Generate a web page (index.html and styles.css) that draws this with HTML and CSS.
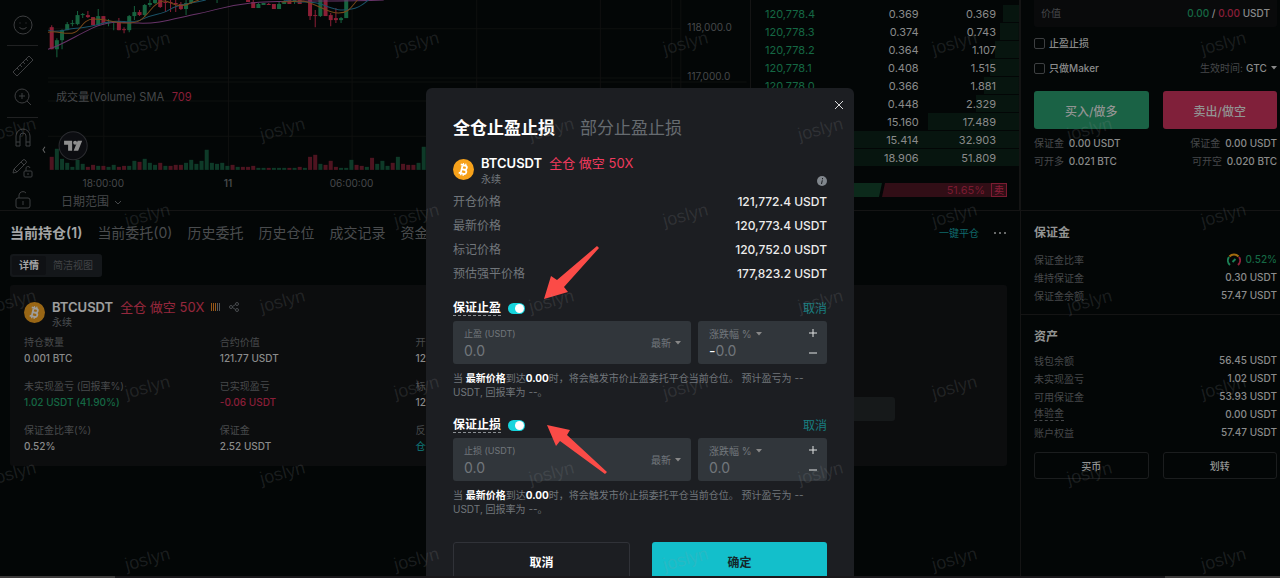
FILE: index.html
```html
<!DOCTYPE html>
<html lang="zh-CN">
<head>
    <meta charset="UTF-8">
    <meta name="viewport" content="width=device-width, initial-scale=1.0">
    <title>BTCUSDT 永续</title>
    <link rel="stylesheet" href="styles.css">
</head>
<body>

    <!-- Shared icons -->
    <svg class="sprite" aria-hidden="true">
        <symbol id="coin" viewBox="0 0 20 20">
            <circle cx="10" cy="10" r="10" fill="#f7a21b"/>
            <g transform="rotate(14 10 10)" fill="none" stroke="#fff" stroke-width="1.7">
                <path d="M6.3 6h4.4a2 2 0 0 1 0 4H8.2M8.2 10h3a2 2 0 0 1 0 4H6.3M8.2 6v8"/>
                <path d="M8.6 4v2M11 4v2M8.6 14v2M11 14v2" stroke-width="1.2"/>
            </g>
        </symbol>
    </svg>

    <div class="page">
        <main class="main">
            <section class="market">
                <!-- Drawing tools -->
                <nav class="tools">
                    <button type="button" aria-label="Emoji"><svg viewBox="0 0 22 22"><circle cx="11" cy="11" r="9"/><path d="M7.5 13c1 2.600 6 2.600 7 0M8 8.500v1M14 8.500v1"/></svg></button>
                    <hr>
                    <button type="button" aria-label="Ruler"><svg viewBox="0 0 22 22"><path d="M1 17 17 1l4 4L5 21zM5 13l2 2M8 10l2 2M11 7l2 2M14 4l2 2"/></svg></button>
                    <button type="button" aria-label="Zoom"><svg viewBox="0 0 22 22"><circle cx="10" cy="10" r="7"/><path d="m15 15 4 4M10 7v6M7 10h6"/></svg></button>
                    <hr>
                    <button type="button" aria-label="Magnet"><svg viewBox="0 0 22 22"><path d="M4 19V9a7 7 0 0 1 14 0v10h-4V9a3 3 0 0 0-6 0v10zM4 15h4M14 15h4"/></svg></button>
                    <button type="button" aria-label="Lock drawing"><svg viewBox="0 0 22 22"><path d="m1 15 1-4 9-9q1-1 2 0l1 1q1 1 0 2l-9 9zM9 4l3 3M2 11l3 3"/><rect x="12" y="13" width="8" height="6" rx="1"/><path d="M14 13v-2a2 2 0 0 1 4-1M16 15v2"/></svg></button>
                    <button type="button" aria-label="Lock"><svg viewBox="0 0 22 22"><rect x="4" y="9" width="14" height="10" rx="2"/><path d="M7 9V6a4 4 0 0 1 7-2M11 12v4"/></svg></button>
                </nav>

                <!-- Price chart -->
                <div class="chart">
                    <svg class="chart-canvas" viewBox="48 0 703 192" preserveAspectRatio="xMinYMin slice">
                        <path class="grid-line" d="M48 28.500H677M48 77.500H677M48 81.500H743M48 100.500H677M48 135.500H677M103.500 0V169M227.500 0V169M350.500 0V169M474.500 0V169M597.500 0V169M668.500 0V169M677.500 0V169"/>
                        <g id="candles"></g>
                        <path class="ma ma-slow" d="M48 49C60 46 75 36 92 28S120 22 138 23 172 19 196 14 222 6 250 3 330 2 382 0"/>
                        <path class="ma ma-mid" d="M48 30C58 34 66 28 76 28S94 25 108 22 130 25 142 19 160 15 168 10 182 5 205 0M283 0C298 4 310 0 322 5S340 11 350 9 362 3 367 0"/>
                        <path class="ma ma-fast" d="M48 32C56 30 62 34 72 33S80 19 94 19 114 23 126 23 142 20 150 10 164 0 168 2 182 8 190 3L198 0M280 2 302 1C318 5 326 13 337 13S350 6 356 0"/>
                        <g id="volume"></g>
                        <text class="chart-label" x="56" y="100">成交量(Volume) SMA</text>
                        <text class="chart-label chart-value" x="171" y="100">709</text>
                        <circle cx="73" cy="145" r="14" fill="#0c0d11" stroke="#2b2c30"/>
                        <path fill="#8e8e8e" d="M64 140h8v10h-4v-6h-4zM77.500 140h4.500l-4 10h-4.500z"/>
                        <circle cx="75" cy="142" r="2" fill="#8e8e8e"/>
                        <path class="fold" d="m45 146-2 3 2 3"/>
                        <text class="axis-label" x="684" y="31">118,000.0</text>
                        <text class="axis-label" x="684" y="80">117,000.0</text>
                        <text class="axis-label axis-time" x="103" y="186">18:00:00</text>
                        <text class="axis-label axis-time axis-day" x="227" y="186">11</text>
                        <text class="axis-label axis-time" x="350" y="186">06:00:00</text>
                    </svg>
                    <button type="button" class="range">日期范围 <svg viewBox="0 0 8 8"><path d="m1 3 3 3 3-3"/></svg></button>
                </div>

                <!-- Order book -->
                <div class="book">
                    <table class="book-table">
                        <tbody>
                            <tr style="--depth: 6%"><td>120,778.4</td><td>0.369</td><td>0.369</td></tr>
                            <tr style="--depth: 7%"><td>120,778.3</td><td>0.374</td><td>0.743</td></tr>
                            <tr style="--depth: 9%"><td>120,778.2</td><td>0.364</td><td>1.107</td></tr>
                            <tr style="--depth: 11%"><td>120,778.1</td><td>0.408</td><td>1.515</td></tr>
                            <tr style="--depth: 13%"><td>120,778.0</td><td>0.366</td><td>1.881</td></tr>
                            <tr style="--depth: 16%"><td>120,777.9</td><td>0.448</td><td>2.329</td></tr>
                            <tr style="--depth: 34%"><td>120,777.8</td><td>15.160</td><td>17.489</td></tr>
                            <tr style="--depth: 100%"><td>120,777.7</td><td>15.414</td><td>32.903</td></tr>
                            <tr style="--depth: 100%"><td>120,777.6</td><td>18.906</td><td>51.809</td></tr>
                        </tbody>
                    </table>
                    <div class="ratio">
                        <span class="ratio-buy" style="width: 48.35%"></span>
                        <span class="ratio-sell">51.65%</span>
                        <span class="ratio-tag">卖</span>
                    </div>
                </div>
            </section>

            <!-- Positions -->
            <section class="positions">
                <div class="position-tabs">
                    <a href="#" class="active">当前持仓(1)</a>
                    <a href="#">当前委托(0)</a>
                    <a href="#">历史委托</a>
                    <a href="#">历史仓位</a>
                    <a href="#">成交记录</a>
                    <a href="#">资金流水</a>
                    <a href="#" class="close-all">一键平仓</a>
                    <button type="button" class="more" aria-label="More"><i></i><i></i><i></i></button>
                </div>
                <div class="view-switch">
                    <button type="button" class="active">详情</button>
                    <button type="button">简洁视图</button>
                </div>
                <article class="card">
                    <div class="symbol dim">
                        <svg class="coin"><use href="#coin"/></svg>
                        <div>
                            <div class="symbol-line">
                                <strong>BTCUSDT</strong>
                                <span class="side">全仓 做空 50X</span>
                                <svg class="risk" viewBox="0 0 11 8"><path stroke="#f58a1f" d="M.5 0v8M2.500 0v8M4.500 0v8"/><path stroke="#8b8b8b" d="M6.500 0v8M8.500 0v8"/></svg>
                                <svg class="share" viewBox="0 0 10 10"><circle cx="2" cy="5" r="1.500"/><circle cx="8" cy="2" r="1.500"/><circle cx="8" cy="8" r="1.500"/><path d="m3.500 4.500 3-2M3.500 5.500l3 2"/></svg>
                            </div>
                            <div class="symbol-type">永续</div>
                        </div>
                    </div>
                    <dl class="stats">
                        <div><dt>持仓数量</dt><dd>0.001 BTC</dd></div>
                        <div><dt>合约价值</dt><dd>121.77 USDT</dd></div>
                        <div><dt>开仓价格</dt><dd>121,772.4</dd></div>
                        <div></div>
                        <div></div>
                        <div><dt>未实现盈亏 (回报率%)</dt><dd class="up">1.02 USDT (41.90%)</dd></div>
                        <div><dt>已实现盈亏</dt><dd class="down">-0.06 USDT</dd></div>
                        <div><dt>标记价格</dt><dd>120,752.0</dd></div>
                        <div></div>
                        <div class="card-action"><button type="button" aria-label="平仓"></button></div>
                        <div><dt>保证金比率(%)</dt><dd>0.52%</dd></div>
                        <div><dt>保证金</dt><dd>2.52 USDT</dd></div>
                        <div><dt>反向开仓</dt><dd class="link">仓位反向</dd></div>
                    </dl>
                </article>
            </section>
        </main>

        <!-- Order form and balances -->
        <aside class="side-panel">
            <section class="order">
                <div class="worth"><span>价值</span><b><span class="up">0.00</span> / <span class="down">0.00</span> USDT</b></div>
                <div class="check-row">
                    <label><input type="checkbox">止盈止损</label>
                </div>
                <div class="check-row">
                    <label><input type="checkbox">只做Maker</label>
                    <span class="tif"><label for="tif">生效时间:</label>
                        <select id="tif"><option>GTC</option><option>IOC</option></select></span>
                </div>
                <div class="pair">
                    <button type="button" class="buy">买入/做多</button>
                    <button type="button" class="sell">卖出/做空</button>
                </div>
                <div class="pair limits">
                    <p>保证金 <b>0.00 USDT</b><br>可开多 <b>0.021 BTC</b></p>
                    <p>保证金 <b>0.00 USDT</b><br>可开空 <b>0.020 BTC</b></p>
                </div>
            </section>
            <section class="balance margin-box">
                <h2>保证金</h2>
                <dl>
                    <div><dt>保证金比率</dt><dd class="up"><svg class="gauge" viewBox="0 0 14 13"><path stroke="#22a06b" d="M3 12A6 6 0 0 1 2 4"/><path stroke="#c98510" d="M2.500 3.500a6 6 0 0 1 9 0"/><path stroke="#b52a49" d="M12 4a6 6 0 0 1-1 8"/><path stroke="#22a06b" d="m5.500 9 3-3"/></svg>0.52%</dd></div>
                    <div><dt>维持保证金</dt><dd>0.30 USDT</dd></div>
                    <div><dt>保证金余额</dt><dd>57.47 USDT</dd></div>
                </dl>
            </section>
            <section class="balance">
                <h2>资产</h2>
                <dl>
                    <div><dt>钱包余额</dt><dd>56.45 USDT</dd></div>
                    <div><dt>未实现盈亏</dt><dd>1.02 USDT</dd></div>
                    <div><dt>可用保证金</dt><dd>53.93 USDT</dd></div>
                    <div><dt class="hint">体验金</dt><dd>0.00 USDT</dd></div>
                    <div><dt>账户权益</dt><dd>57.47 USDT</dd></div>
                </dl>
                <div class="pair">
                    <button type="button" class="outline">买币</button>
                    <button type="button" class="outline">划转</button>
                </div>
            </section>
        </aside>

        <!-- TP/SL dialog -->
        <div class="overlay">
            <form class="modal">
                <button type="button" class="close" aria-label="关闭"><svg viewBox="0 0 10 10"><path d="m1 1 8 8M9 1 1 9"/></svg></button>
                <div class="modal-tabs">
                    <button type="button" class="active">全仓止盈止损</button>
                    <button type="button">部分止盈止损</button>
                </div>
                <div class="symbol">
                    <svg class="coin"><use href="#coin"/></svg>
                    <div>
                        <div class="symbol-line">
                            <strong>BTCUSDT</strong>
                            <span class="side">全仓 做空 50X</span>
                        </div>
                        <div class="symbol-type">永续</div>
                    </div>
                    <svg class="info" viewBox="0 0 10 10"><circle cx="5" cy="5" r="5" fill="#80868c"/><path stroke="#1c1e22" d="m5.300 4.300-.8 3.700M5.500 2v1.300"/></svg>
                </div>
                <dl class="prices">
                    <div><dt>开仓价格</dt><dd>121,772.4 USDT</dd></div>
                    <div><dt>最新价格</dt><dd>120,773.4 USDT</dd></div>
                    <div><dt>标记价格</dt><dd>120,752.0 USDT</dd></div>
                    <div><dt>预估强平价格</dt><dd>177,823.2 USDT</dd></div>
                </dl>

                <section class="trigger">
                    <div class="trigger-head">
                        <label for="tp-on">保证止盈</label>
                        <input type="checkbox" class="switch" id="tp-on" checked>
                        <a href="#">取消</a>
                    </div>
                    <div class="fields">
                        <div class="field">
                            <div class="field-main">
                                <label for="tp">止盈 (USDT)</label>
                                <input type="text" id="tp" placeholder="0.0">
                            </div>
                            <select aria-label="价格类型"><option>最新</option><option>标记</option></select>
                        </div>
                        <div class="field">
                            <div class="field-main">
                                <select class="unit" aria-label="单位"><option>涨跌幅 %</option></select>
                                <div class="signed"><span>-</span><input type="text" aria-label="止盈涨跌幅" placeholder="0.0"></div>
                            </div>
                            <div class="stepper">
                                <button type="button" aria-label="增加"><svg viewBox="0 0 8 8"><path d="M0 4h8M4 0v8"/></svg></button>
                                <button type="button" aria-label="减少"><svg viewBox="0 0 8 8"><path d="M0 4h8"/></svg></button>
                            </div>
                        </div>
                    </div>
                    <p>当 <b>最新价格</b>到达<b>0.00</b>时，将会触发市价止盈委托平仓当前仓位。 预计盈亏为 -- USDT, 回报率为 --。</p>
                </section>

                <section class="trigger">
                    <div class="trigger-head">
                        <label for="sl-on">保证止损</label>
                        <input type="checkbox" class="switch" id="sl-on" checked>
                        <a href="#">取消</a>
                    </div>
                    <div class="fields">
                        <div class="field">
                            <div class="field-main">
                                <label for="sl">止损 (USDT)</label>
                                <input type="text" id="sl" placeholder="0.0">
                            </div>
                            <select aria-label="价格类型"><option>最新</option><option>标记</option></select>
                        </div>
                        <div class="field">
                            <div class="field-main">
                                <select class="unit" aria-label="单位"><option>涨跌幅 %</option></select>
                                <div class="signed"><input type="text" aria-label="止损涨跌幅" placeholder="0.0"></div>
                            </div>
                            <div class="stepper">
                                <button type="button" aria-label="增加"><svg viewBox="0 0 8 8"><path d="M0 4h8M4 0v8"/></svg></button>
                                <button type="button" aria-label="减少"><svg viewBox="0 0 8 8"><path d="M0 4h8"/></svg></button>
                            </div>
                        </div>
                    </div>
                    <p>当 <b>最新价格</b>到达<b>0.00</b>时，将会触发市价止损委托平仓当前仓位。 预计盈亏为 -- USDT, 回报率为 --。</p>
                </section>

                <div class="modal-actions">
                    <button type="button" class="cancel">取消</button>
                    <button type="button" class="confirm">确定</button>
                </div>

                <svg class="arrows" viewBox="0 0 428 490"><path d="m171 158 2 2-35 39 4 5-24 7 7-23 6 4zM121 337l23 5-3 5 40 37-2 2-45-33-4 5z"/></svg>
            </form>
        </div>

        <div class="watermark" id="watermark" aria-hidden="true"></div>
    </div>
    <footer class="scrollbar"><i></i><i></i></footer>

    <script src="chart.js"></script>
</body>
</html>
```
FILE: styles.css
```css
* {
    box-sizing: border-box;
}
body {
    margin: 0;
    height: 100vh;
    display: flex;
    flex-direction: column;
    overflow: hidden;
    background: #030606;
    color: #8a8b8b;
    font-family: Inter, "Noto Sans CJK SC", sans-serif;
    font-size: 10px;
}
button, input, select {
    font: inherit;
    color: inherit;
    background: none;
    border: 0;
    margin: 0;
    padding: 0;
}
a {
    color: inherit;
    text-decoration: none;
}
dl, dd, p, h2 {
    margin: 0;
}
svg {
    fill: none;
    stroke-width: 1;
}
b, strong {
    font-weight: 500;
}
.sprite {
    position: absolute;
    width: 0;
    height: 0;
}
.up {
    color: #156844;
}
.down {
    color: #8a1e38;
}
.link {
    color: #0f6a6c;
}

/* Page frame */
.page {
    position: relative;
    flex: 1;
    min-height: 0;
    display: grid;
    grid-template-columns: 1fr 260px;
    overflow: hidden;
}
.main {
    min-width: 0;
}
.market {
    display: grid;
    grid-template-columns: 48px 1fr 269px;
    height: 211px;
    border-bottom: 1px solid #141414;
}

/* Drawing tools */
.tools {
    display: flex;
    flex-direction: column;
    align-items: center;
    justify-content: space-between;
    padding: 14px 3px 0 0;
    overflow: hidden;
}
.tools button {
    height: 22px;
}
.tools svg {
    display: block;
    width: 22px;
    height: 22px;
    stroke: #3d3e40;
}
.tools hr {
    width: 31px;
    margin: 0;
    border: 0;
    border-top: 1px solid #202122;
}

/* Chart */
.chart {
    min-width: 0;
    border-right: 1px solid #141414;
}
.chart-canvas {
    display: block;
    width: 100%;
    height: 193px;
    overflow: visible;
}
.chart-canvas text {
    stroke: none;
}
.grid-line {
    stroke: #0f100f;
}
.ma-slow {
    stroke: #683469;
}
.ma-mid {
    stroke: #1a5368;
}
.ma-fast {
    stroke: #78481a;
}
.fold {
    stroke: #666;
}
.candle-up {
    stroke: #17633f;
}
.candle-down {
    stroke: #8c1f36;
}
.volume-up {
    stroke: #0e3a28;
}
.volume-down {
    stroke: #4e1420;
}
.chart-label {
    font-size: 11px;
    fill: #46484a;
}
.chart-value {
    fill: #8a1e38;
}
.axis-label {
    font-size: 10px;
    fill: #46484a;
}
.axis-time {
    text-anchor: middle;
}
.axis-day {
    font-weight: 600;
}
.range {
    display: flex;
    align-items: center;
    gap: 5px;
    margin-left: 13px;
    font-size: 12px;
    line-height: 18px;
    color: #46484a;
}
.range svg {
    width: 8px;
    height: 8px;
    stroke: #46484a;
}

/* Order book */
.book {
    padding-top: 5px;
    border-right: 1px solid #141414;
}
.book-table {
    width: 100%;
    table-layout: fixed;
    border-collapse: collapse;
}
.book-table tr {
    height: 18px;
    background: linear-gradient(#07150f, #07150f) right top / var(--depth) 17px no-repeat;
}
.book-table td {
    padding: 0;
    text-align: right;
    font-size: 11px;
    line-height: 18px;
}
.book-table td:first-child {
    padding-left: 14px;
    text-align: left;
    color: #156844;
}
.book-table td:nth-child(2) {
    padding-right: 11px;
}
.book-table td:last-child {
    padding-right: 23px;
}
.ratio {
    display: flex;
    align-items: center;
    height: 14px;
    margin: 16px 12px 0 14px;
}
.ratio-buy {
    height: 14px;
    background: #0c2a1b;
    clip-path: polygon(0 0, 100% 0, calc(100% - 3px) 100%, 0 100%);
}
.ratio-sell {
    flex: 1;
    height: 14px;
    padding-right: 6px;
    background: #310e16;
    color: #7a1b31;
    font-size: 11px;
    line-height: 14px;
    text-align: right;
    clip-path: polygon(3px 0, 100% 0, 100% 100%, 0 100%);
}
.ratio-tag {
    width: 16px;
    height: 14px;
    border: 1px solid #7a1b31;
    background: #310e16;
    color: #8a1e38;
    line-height: 12px;
    text-align: center;
}

/* Positions */
.positions {
    padding: 10px 13px 0 10px;
}
.position-tabs {
    display: flex;
    align-items: center;
    gap: 15px;
    font-size: 14px;
    line-height: 24px;
    color: #4a4c4e;
}
.position-tabs .active {
    color: #a5a6a6;
    font-weight: 600;
}
.position-tabs .close-all {
    margin-left: auto;
    color: #0f6a6c;
    font-size: 10px;
}
.more {
    display: flex;
    gap: 2px;
}
.more i {
    width: 2px;
    height: 2px;
    margin-right: 1px;
    border-radius: 50%;
    background: #8a8b8b;
}
.view-switch {
    display: inline-flex;
    margin-top: 9px;
    padding: 2px;
    border-radius: 3px;
    background: #14171a;
    color: #414346;
}
.view-switch button {
    padding: 0 7px;
    line-height: 19px;
    border-radius: 2px;
}
.view-switch .active {
    background: #0f1114;
    color: #a5a6a6;
    font-weight: 600;
}
.card {
    margin-top: 8px;
    padding: 12px 4px 0 14px;
    height: 181px;
    border-radius: 3px;
    background: #0c0d0e;
}
.symbol {
    display: flex;
    align-items: center;
    gap: 7px;
}
.coin {
    width: 21px;
    height: 21px;
}
.symbol-line {
    display: flex;
    align-items: center;
    gap: 7px;
    font-size: 13px;
    line-height: 20px;
}
.symbol-line strong {
    color: #fff;
    font-weight: 600;
}
.side {
    color: #ef3a5d;
}
.symbol-type {
    line-height: 10px;
    color: #71767b;
}
.dim {
    opacity: .6;
}
.risk {
    width: 11px;
    height: 8px;
}
.share {
    width: 10px;
    height: 10px;
    stroke: #71767b;
}
.stats {
    display: grid;
    grid-template-columns: repeat(5, 1fr);
    row-gap: 12px;
    margin-top: 8px;
}
.stats dt {
    line-height: 15px;
    color: #484a4c;
}
.stats dd {
    font-weight: 500;
    line-height: 17px;
    white-space: nowrap;
}
.card-action {
    height: 32px;
    padding-top: 18px;
}
.card-action button {
    display: block;
    width: 88px;
    height: 24px;
    border-radius: 3px;
    background: #16191a;
}

/* Right panel */
.side-panel {
    border-left: 1px solid #141414;
}
.order {
    height: 211px;
    padding: 0 3px 0 13px;
    border-bottom: 1px solid #141414;
}
.worth {
    display: flex;
    justify-content: space-between;
    padding: 0 7px;
    border-radius: 0 0 3px 3px;
    background: #090a0b;
    color: #46484a;
    line-height: 27px;
}
.worth b {
    color: #8a8b8b;
}
.check-row {
    display: flex;
    justify-content: space-between;
    line-height: 18px;
    margin-top: 7px;
}
.check-row label {
    display: flex;
    align-items: center;
    gap: 4px;
    font-weight: 500;
}
.check-row input {
    appearance: none;
    width: 11px;
    height: 11px;
    border: 1px solid #3d3f41;
    border-radius: 2px;
}
.tif {
    display: flex;
    gap: 3px;
}
.tif label {
    color: #46484a;
    font-weight: 400;
}
select {
    appearance: none;
    padding-right: 10px;
    background: url("data:image/svg+xml,%3Csvg xmlns='http://www.w3.org/2000/svg' viewBox='0 0 6 4'%3E%3Cpath fill='%23888' d='M0 0h6L3 3.500z'/%3E%3C/svg%3E") right center / 6px 4px no-repeat;
}
.tif select {
    font-weight: 500;
}
.pair {
    display: grid;
    grid-template-columns: 1fr 1fr;
    gap: 14px;
    margin-top: 14px;
}
.pair button {
    height: 38px;
    border-radius: 3px;
    font-size: 12px;
    font-weight: 500;
    color: #929493;
}
.pair .buy {
    background: #1a6245;
}
.pair .sell {
    background: #80203a;
}
.pair .outline {
    height: 27px;
    border: 1px solid #1b1d1e;
    font-size: 10px;
}
.limits {
    margin-top: 5px;
    color: #46484a;
    line-height: 18px;
}
.limits b {
    margin-left: 2px;
    color: #8a8b8b;
}
.limits p:last-child {
    text-align: right;
}
.balance {
    padding: 13px 3px 0 13px;
}
.margin-box {
    height: 104px;
    border-bottom: 1px solid #141414;
}
.margin-box h2 {
    margin-bottom: 8px;
}
.balance h2 {
    color: #929493;
    font-size: 12px;
    font-weight: 600;
    line-height: 18px;
}
.balance h2 + dl {
    padding-top: 5px;
}
.margin-box h2 + dl {
    padding-top: 0;
}
.balance dl div {
    display: flex;
    justify-content: space-between;
    align-items: center;
    height: 18px;
}
.balance dt {
    color: #46484a;
}
.balance .hint {
    border-bottom: 1px dashed #46484a;
    line-height: 13px;
}
.balance dd {
    display: flex;
    align-items: center;
    gap: 5px;
    font-weight: 500;
}
.balance .pair {
    margin-top: 11px;
}
.gauge {
    width: 14px;
    height: 13px;
    stroke-width: 2;
    opacity: .8;
}

/* Dialog */
.overlay {
    position: absolute;
    inset: 88px 0 0;
    display: flex;
    justify-content: center;
    align-items: flex-start;
}
.modal {
    position: relative;
    width: 428px;
    padding: 28px 27px 24px;
    border-radius: 6px;
    background: #1c1e22;
    color: #71767b;
}
.close {
    position: absolute;
    top: 12px;
    right: 10px;
}
.close svg {
    display: block;
    width: 10px;
    height: 10px;
    stroke: #d8d9da;
}
.modal-tabs {
    display: flex;
    gap: 25px;
    font-size: 17px;
    line-height: 24px;
    color: #666b70;
}
.modal-tabs .active {
    color: #fff;
    font-weight: 600;
}
.modal .symbol {
    margin-top: 13px;
}
.modal .symbol-type {
    line-height: 13px;
}
.info {
    width: 10px;
    height: 10px;
    margin-left: auto;
    align-self: flex-end;
}
.prices {
    margin-top: 4px;
    font-size: 12px;
    line-height: 24px;
}
.prices div {
    display: flex;
    justify-content: space-between;
}
.prices dd {
    color: #ececec;
    font-weight: 500;
}
.trigger {
    margin-top: 14px;
}
.trigger + .trigger {
    margin-top: 18px;
}
.trigger-head {
    display: flex;
    align-items: center;
    font-size: 12px;
    line-height: 15px;
}
.trigger-head label {
    border-bottom: 1px dashed #8a8e92;
    color: #fff;
    font-weight: 600;
}
.trigger-head a {
    margin-left: auto;
    color: #187f80;
}
.switch {
    appearance: none;
    display: flex;
    justify-content: flex-end;
    width: 17px;
    height: 11px;
    margin-left: 7px;
    padding: 1px;
    border-radius: 6px;
    background: #17d5dd;
}
.switch::before {
    content: "";
    width: 9px;
    height: 9px;
    border-radius: 50%;
    background: #fff;
}
.fields {
    display: grid;
    grid-template-columns: 238fr 129fr;
    gap: 7px;
    margin-top: 5px;
}
.field {
    display: flex;
    align-items: center;
    height: 43px;
    padding: 0 10px 0 11px;
    border-radius: 3px;
    background: #31363b;
}
.field-main {
    flex: 1;
    min-width: 0;
}
.field label {
    display: block;
    font-size: 9px;
    line-height: 16px;
}
.field select.unit {
    display: block;
    line-height: 16px;
}
.field input {
    display: block;
    width: 100%;
    height: 18px;
    font-size: 14px;
}
.field input::placeholder {
    color: #71767b;
    opacity: 1;
}
.signed {
    display: flex;
    align-items: center;
    font-size: 14px;
    line-height: 18px;
    color: #fff;
}
.stepper {
    display: grid;
    gap: 12px;
}
.stepper svg {
    display: block;
    width: 8px;
    height: 8px;
    stroke: #e2e3e4;
}
.trigger p {
    margin-top: 7px;
    line-height: 14px;
}
.trigger p b {
    color: #fff;
    font-weight: 700;
}
.modal-actions {
    display: grid;
    grid-template-columns: 177fr 175fr;
    gap: 22px;
    margin-top: 26px;
}
.modal-actions button {
    height: 38px;
    border-radius: 3px;
    font-size: 12px;
    font-weight: 600;
}
.cancel {
    border: 1px solid #303238;
    color: #fff;
}
.confirm {
    background: #13bfcb;
    color: #14282c;
}
.arrows {
    position: absolute;
    top: 0;
    left: 0;
    width: 428px;
    height: 490px;
    pointer-events: none;
}
.arrows path {
    fill: #fb4b47;
}

/* Watermark */
.watermark {
    position: absolute;
    inset: 0;
    overflow: hidden;
    pointer-events: none;
    color: rgba(150, 155, 160, .16);
    font-family: "Liberation Sans", Arial, sans-serif;
    font-size: 18px;
}
.watermark div {
    display: flex;
    height: 86px;
    margin-left: 13px;
}
.watermark div:nth-child(even) {
    margin-left: -121px;
}
.watermark span {
    flex: 0 0 269px;
    line-height: 86px;
    text-align: center;
    transform: rotate(-15deg);
}
.scrollbar {
    display: flex;
    justify-content: space-between;
    height: 2px;
    background: #1a181b;
}
.scrollbar i {
    width: 115px;
    background: #3c3a3a;
}
```
FILE: chart.js
```javascript
const STEP = 5.14;
const START = 51.7;
const BASE = 169;

// [index, open/close top, bottom, wick top, wick bottom, direction]
const candles = [
    [0, 27, 49, 25, 49, 'down'], [1, 40, 49, 38, 57, 'up'], [2, 30, 40, 29, 49, 'up'],
    [3, 24, 30, 22, 30, 'up'], [4, 23, 24, 20, 26, 'up'], [5, 15, 24, 11, 25, 'up'],
    [6, 14, 15, 13, 18, 'up'], [7, 15, 17, 11, 18, 'down'], [8, 17, 25, 17, 25, 'down'],
    [9, 16, 25, 9, 25, 'up'], [10, 16, 23, 16, 24, 'down'], [11, 22, 23, 19, 26, 'up'],
    [12, 21, 22, 21, 30, 'up'], [13, 21, 30, 18, 30, 'down'], [14, 29, 30, 27, 33, 'down'],
    [15, 16, 30, 15, 32, 'up'], [16, 12, 16, 6, 20, 'up'], [17, 12, 15, 10, 16, 'down'],
    [18, 5, 15, 4, 17, 'up'], [19, 3, 5, 0, 7, 'up'], [20, 0, 3, 0, 4, 'up'],
    [21, 0, 7, 0, 8, 'down'], [22, 2, 3, 0, 12, 'down'], [23, 2, 3, 0, 12, 'down'],
    [24, 3, 4, 0, 12, 'down'], [25, 4, 9, 2, 10, 'down'], [26, 3, 9, 0, 15, 'up'],
    [27, 0, 3, 0, 4, 'up'], [32, 0, 0, 0, 3, 'up'], [38, 0, 2, 0, 2, 'down'],
    [39, 2, 8, 0, 8, 'down'], [40, 4, 8, 3, 8, 'up'], [41, 3, 5, 3, 5, 'up'],
    [42, 4, 5, 3, 5, 'down'], [43, 4, 9, 4, 9, 'down'], [44, 4, 9, 2, 9, 'up'],
    [45, 1, 4, 0, 4, 'up'], [46, 0, 4, 0, 4, 'down'], [47, 0, 2, 0, 4, 'up'],
    [48, 0, 4, 0, 4, 'down'], [50, 0, 16, 0, 20, 'down'], [51, 15, 16, 10, 27, 'down'],
    [52, 0, 16, 0, 17, 'up'], [53, 0, 16, 0, 16, 'down'], [54, 15, 20, 13, 26, 'down'],
    [55, 18, 20, 8, 23, 'down'], [56, 18, 20, 17, 23, 'up'], [57, 0, 18, 0, 18, 'up']
];

// Positive is a buy bar, negative is a sell bar
const volume = [
    -13, 21, 11, 7, 3, 10, 6, -3, -5, 4, -4, 3, 5, -3, -4, 4, 9, -8, 11, 7, 5, -7, 4, -4, -5, -5,
    7, 10, 6, 9, 20, 7, 6, 7, 4, -5, 3, -3, -3, -4, 2, 2, -2, 2, 2, 2, -2, 2, -3, 2, -13, -15,
    6, -5, -9, -3, 2, 2, 10, -5, -4, 3, -12, 6, 9, 4, -7, 13, -6, -5, -5, 7, 23, 16
];

function addLine(parent, x, top, bottom, width, name) {
    const line = document.createElementNS('http://www.w3.org/2000/svg', 'line');
    line.setAttribute('x1', x);
    line.setAttribute('x2', x);
    line.setAttribute('y1', top);
    line.setAttribute('y2', bottom);
    line.setAttribute('stroke-width', width);
    line.setAttribute('class', name);
    parent.appendChild(line);
}

const candleGroup = document.getElementById('candles');
candles.forEach(([i, top, bottom, high, low, dir]) => {
    const x = START + i * STEP;
    addLine(candleGroup, x, high, low, 1, 'candle-' + dir);
    addLine(candleGroup, x, top, bottom, 4, 'candle-' + dir);
});

const volumeGroup = document.getElementById('volume');
volume.forEach((v, i) => {
    addLine(volumeGroup, START + i * STEP, BASE - Math.abs(v), BASE, 4, v > 0 ? 'volume-up' : 'volume-down');
});

// Tiled user name
const watermark = document.getElementById('watermark');
for (let row = 0; row < 7; row++) {
    const line = document.createElement('div');
    for (let col = 0; col < 5; col++) {
        const mark = document.createElement('span');
        mark.textContent = 'joslyn';
        line.appendChild(mark);
    }
    watermark.appendChild(line);
}
```
